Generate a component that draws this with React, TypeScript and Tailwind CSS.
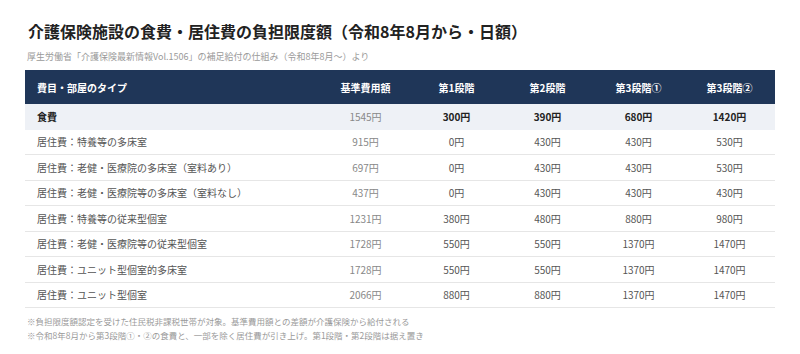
const rows = [
  { label: '食費', base: '1545円', v: ['300円', '390円', '680円', '1420円'], strong: true },
  { label: '居住費：特養等の多床室', base: '915円', v: ['0円', '430円', '430円', '530円'] },
  { label: '居住費：老健・医療院の多床室（室料あり）', base: '697円', v: ['0円', '430円', '430円', '530円'] },
  { label: '居住費：老健・医療院等の多床室（室料なし）', base: '437円', v: ['0円', '430円', '430円', '430円'] },
  { label: '居住費：特養等の従来型個室', base: '1231円', v: ['380円', '480円', '880円', '980円'] },
  { label: '居住費：老健・医療院等の従来型個室', base: '1728円', v: ['550円', '550円', '1370円', '1470円'] },
  { label: '居住費：ユニット型個室的多床室', base: '1728円', v: ['550円', '550円', '1370円', '1470円'] },
  { label: '居住費：ユニット型個室', base: '2066円', v: ['880円', '880円', '1370円', '1470円'] },
];

const heads = ['基準費用額', '第1段階', '第2段階', '第3段階①', '第3段階②'];

export default function App() {
  return (
    <div
      className="w-[800px] h-[354px] bg-white px-[25px] pt-[20px]"
      style={{ fontFamily: '"Noto Sans CJK JP", "Noto Sans", sans-serif' }}
    >
      <h1 className="pl-[3px] text-[16px] leading-[23px] font-bold text-[#222]">
        介護保険施設の食費・居住費の負担限度額（令和8年8月から・日額）
      </h1>
      <p className="mt-[7px] pl-[2px] text-[9px] leading-[13px] text-[#9a9a9a]">
        厚生労働省「介護保険最新情報Vol.1506」の補足給付の仕組み（令和8年8月～）より
      </p>
      <div className="mt-[7px] w-[750px]">
        <div className="flex h-[34px] items-center bg-[#1f3658] text-[10px] font-bold text-white">
          <div className="w-[295px] pl-[12px]">費目・部屋のタイプ</div>
          {heads.map((h) => (
            <div key={h} className="w-[91px] text-center">{h}</div>
          ))}
        </div>
        {rows.map((r) => (
          <div
            key={r.label}
            className={`flex h-[25.5px] items-center border-b text-[10px] ${
              r.strong ? 'bg-[#eef1f6] border-transparent' : 'border-[#e6e6e6]'
            }`}
          >
            <div className={`w-[295px] pl-[12px] ${r.strong ? 'font-bold text-[#222]' : 'text-[#555]'}`}>
              {r.label}
            </div>
            <div className="w-[91px] text-center text-[#888]">{r.base}</div>
            {r.v.map((x, i) => (
              <div
                key={i}
                className={`w-[91px] text-center ${r.strong ? 'font-bold text-[#222]' : 'text-[#555]'}`}
              >
                {x}
              </div>
            ))}
          </div>
        ))}
      </div>
      <div className="mt-[6px] pl-[2px] text-[8.5px] leading-[14px] text-[#9a9a9a]">
        <p>※負担限度額認定を受けた住民税非課税世帯が対象。基準費用額との差額が介護保険から給付される</p>
        <p>※令和8年8月から第3段階①・②の食費と、一部を除く居住費が引き上げ。第1段階・第2段階は据え置き</p>
      </div>
    </div>
  );
}
